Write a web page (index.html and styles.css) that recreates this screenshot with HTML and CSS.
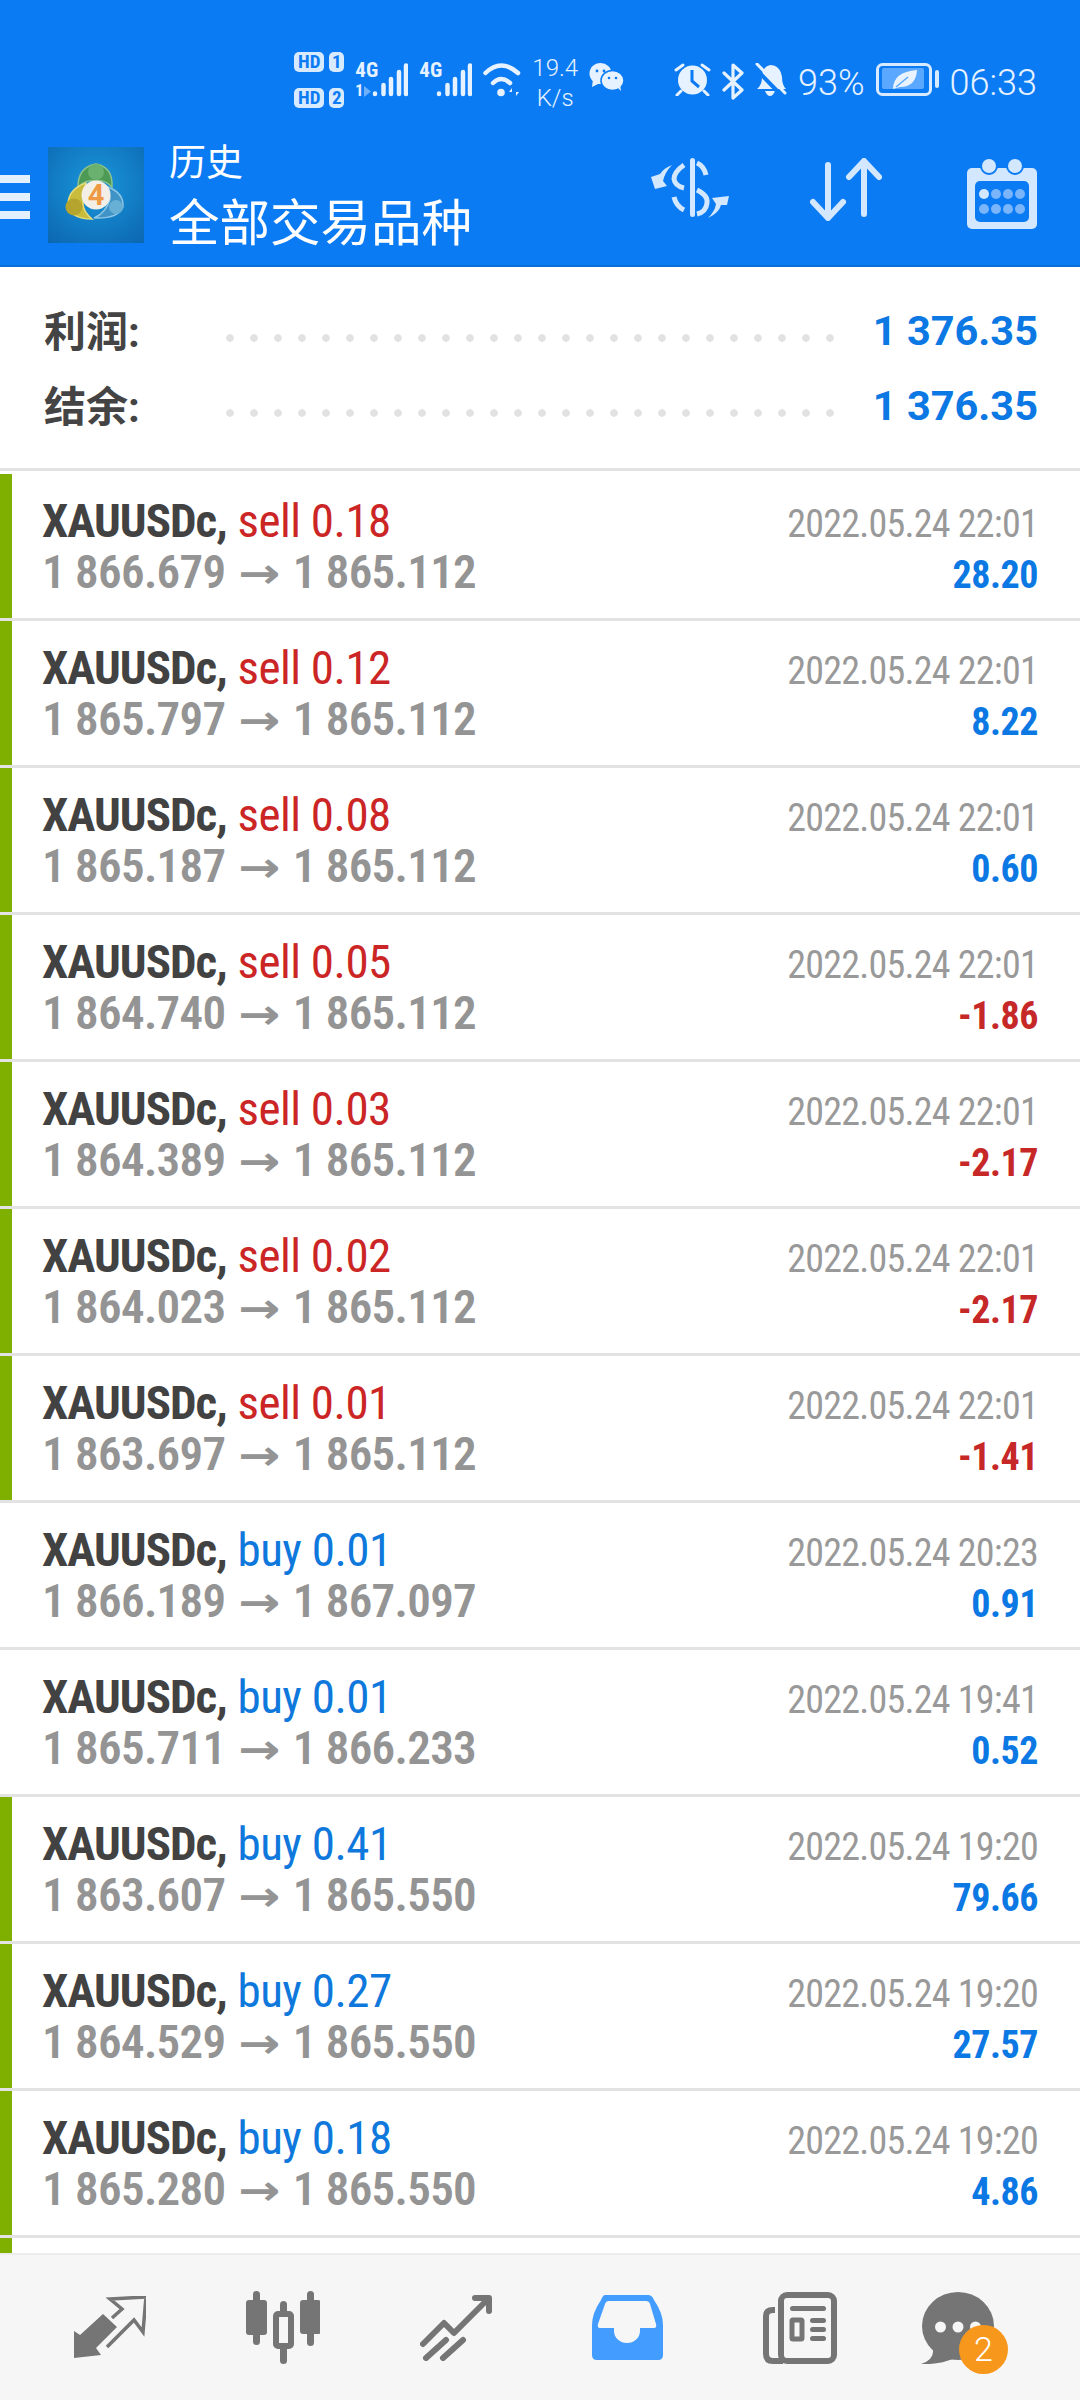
FILE: index.html
```html
<!DOCTYPE html>
<html lang="zh">
<head>
    <meta charset="UTF-8">
    <meta name="viewport" content="width=device-width, initial-scale=1.0">
    <title>历史</title>
    <link rel="stylesheet" href="styles.css">
</head>
<body>
<div class="app">
    <header class="header">
        <div class="statusbar">
            <div class="hd-grid">
                <span class="hd-badge">HD</span><span class="hd-badge">1</span>
                <span class="hd-badge">HD</span><span class="hd-badge">2</span>
            </div>
            <div class="signal">
                <div class="net-labels"><span class="net-text">4G</span><span class="net-small">1<svg width="7" height="11" viewBox="0 0 7 11"><path d="M0 0L7 5.500L0 11Z" fill="#6fb0fb"/></svg></span></div>
                <svg class="bars" width="37" height="34" viewBox="16 0 37 34" stroke="#e6f2ff" stroke-width="4.500" stroke-linecap="round"><path d="M20 31V30.500M28.500 31V22M36 31V16M44 31V9M51 31V2.500"/></svg>
            </div>
            <div class="signal">
                <div class="net-labels"><span class="net-text">4G</span></div>
                <svg class="bars" width="37" height="34" viewBox="16 0 37 34" stroke="#e6f2ff" stroke-width="4.500" stroke-linecap="round"><path d="M20 31V30.500M28.500 31V22M36 31V16M44 31V9M51 31V2.500"/></svg>
            </div>
            <svg width="38" height="34" viewBox="0 0 38 34" fill="none" stroke="#e6f2ff" stroke-linecap="round">
                <path d="M2.500 10Q18 -5 35 10" stroke-width="4.500"/>
                <path d="M10 20Q18 12 27 20" stroke-width="4.500"/>
                <circle cx="18" cy="29.500" r="3.800" fill="#e6f2ff" stroke="none"/>
                <path d="M29 25L26 29H29V33ZM33 33L36 29H33V25Z" fill="#e6f2ff" stroke="none"/>
            </svg>
            <div class="speed"><span>19.4</span><span>K/s</span></div>
            <svg width="35" height="28" viewBox="0 0 35 28">
                <ellipse cx="11.500" cy="10.500" rx="11" ry="10.500" fill="#e6f2ff"/>
                <path d="M4 16L3 24L11 20Z" fill="#e6f2ff"/>
                <ellipse cx="23.500" cy="17.500" rx="11.500" ry="10" fill="#e6f2ff" stroke="#0b7bf4" stroke-width="1.500"/>
                <path d="M28 24L32 28L31 21Z" fill="#e6f2ff"/>
                <circle cx="8" cy="8" r="1.400" fill="#0b7bf4"/><circle cx="15" cy="8" r="1.400" fill="#0b7bf4"/>
                <circle cx="20" cy="15" r="1.300" fill="#0b7bf4"/><circle cx="27" cy="15" r="1.300" fill="#0b7bf4"/>
            </svg>
            <svg class="status-split" width="37" height="33" viewBox="0 0 37 33">
                <circle cx="18.500" cy="17" r="14.500" fill="#e6f2ff"/>
                <path d="M18 7V18L25 24" fill="none" stroke="#0b7bf4" stroke-width="3"/>
                <path d="M2 7L9 2M35 7L28 2M7 28L3 32M30 28L34 32" stroke="#e6f2ff" stroke-width="3" stroke-linecap="round"/>
            </svg>
            <svg width="22" height="37" viewBox="0 0 22 37" fill="none" stroke="#e6f2ff" stroke-width="3.200" stroke-linejoin="round" stroke-linecap="round">
                <path d="M2 10L20 27L11 35V2L20 10L2 27"/>
            </svg>
            <svg width="32" height="33" viewBox="0 0 32 33">
                <path d="M2 26Q7 22 7 14Q7 4 15 2Q25 2 27 14Q27 22 31 26Z" fill="#e6f2ff"/>
                <path d="M10 28H20Q18 33 15 33Q12 33 10 28Z" fill="#e6f2ff"/>
                <path d="M-1 4L26 32" stroke="#0b7bf4" stroke-width="4"/>
                <path d="M2 1L30 30" stroke="#e6f2ff" stroke-width="3" stroke-linecap="round"/>
            </svg>
            <span class="status-text">93%</span>
            <svg width="63" height="33" viewBox="0 0 63 33">
                <rect x="1.500" y="1.500" width="53" height="30" rx="5" fill="none" stroke="#d8eaff" stroke-width="3"/>
                <rect x="6" y="5" width="42" height="21" rx="2" fill="#5aa8ff"/>
                <path d="M17 26Q17 9 41 7Q40 24 24 24Z" fill="#e9f3ff"/>
                <path d="M20 24L32 14" stroke="#5aa8ff" stroke-width="1.500"/>
                <rect x="59" y="7" width="4" height="18" rx="2" fill="#d8eaff"/>
            </svg>
            <span class="status-text">06:33</span>
        </div>
        <div class="toolbar">
            <div class="menu-icon"><span></span><span></span><span></span></div>
            <div class="logo">
                <svg width="96" height="96" viewBox="0 0 96 96">
                    <path d="M30 40Q30 20 48 17Q65 20 64 40Q56 32 48 34Q38 32 30 40Z" fill="#4c9a55" stroke="#8cc28b" stroke-width="1.500"/>
                    <circle cx="48" cy="25" r="8" fill="#6ab06e"/>
                    <path d="M38 36Q20 42 20 58Q22 72 44 72Q32 62 36 50Z" fill="#c9bb3c" stroke="#e4dc7a" stroke-width="1.500"/>
                    <circle cx="26" cy="60" r="8.500" fill="#b5a52e"/>
                    <path d="M60 40Q76 46 75 60Q70 72 46 71Q58 66 62 52Z" fill="#3f93c6" stroke="#8cc6e4" stroke-width="1.500"/>
                    <circle cx="68" cy="60" r="7" fill="#68afd6"/>
                    <circle cx="48" cy="48" r="14.500" fill="#f3eee6"/>
                </svg>
                <span class="logo-num">4</span>
            </div>
            <div class="titles">
                <div class="title-small">历史</div>
                <div class="title-big">全部交易品种</div>
            </div>
            <div class="tools">
                <svg width="79" height="60" viewBox="0 0 79 60" fill="#d3e8ff">
                    <path d="M21 7Q13 10 9 16L0 19L4 31L16 28L12 23Q14 14 21 7Z"/>
                    <path d="M57 60Q68 55 70 47L76 47L78 38L61 40L65 46Q64 53 57 60Z"/>
                    <g fill="none" stroke="#d3e8ff" stroke-width="5">
                        <path d="M41.500 2.500V56.500" stroke-linecap="round"/>
                        <path d="M33 7Q23 14 23 21Q24 28 33 30"/>
                        <path d="M46 5Q53 8 55 17"/>
                        <path d="M46 32Q57 37 56 45Q55 54 46 56"/>
                        <path d="M23 39Q25 48 33 52"/>
                    </g>
                </svg>
                <svg class="tool-arrows" width="72" height="63" viewBox="0 0 72 63" fill="none" stroke="#d3e8ff" stroke-width="6" stroke-linecap="round" stroke-linejoin="round">
                    <path d="M18 7V60M3 44L18 60L33 44"/>
                    <path d="M54 3V56M39 19L54 3L69 19"/>
                </svg>
                <svg width="70" height="71" viewBox="0 0 70 71">
                    <rect y="10" width="70" height="61" rx="5" fill="#d3e8ff"/>
                    <rect x="8" y="23" width="54" height="41" rx="5" fill="#0b7bf4"/>
                    <circle cx="22" cy="8" r="8" fill="#d3e8ff" stroke="#0b7bf4" stroke-width="2"/>
                    <circle cx="48" cy="8" r="8" fill="#d3e8ff" stroke="#0b7bf4" stroke-width="2"/>
                    <g fill="#7ab5fb">
                        <circle cx="17" cy="36" r="5" fill="#d3e8ff"/><circle cx="29" cy="36" r="5"/><circle cx="41" cy="36" r="5"/><circle cx="53" cy="36" r="5"/>
                        <circle cx="17" cy="51" r="5"/><circle cx="29" cy="51" r="5"/><circle cx="41" cy="51" r="5"/><circle cx="53" cy="51" r="5"/>
                    </g>
                </svg>
            </div>
        </div>
    </header>

    <section class="summary">
        <div class="summary-row"><span class="summary-label">利润:</span><span class="dots"></span><span class="summary-value">1 376.35</span></div>
        <div class="summary-row"><span class="summary-label">结余:</span><span class="dots"></span><span class="summary-value">1 376.35</span></div>
    </section>

    <main class="list">
        <div class="row flag"><div><div class="line"><b class="sym">XAUUSDc,</b> <span class="sell">sell 0.18</span></div><div class="line price">1 866.679 <span class="arrow">→</span> 1 865.112</div></div><div class="side"><div class="line date">2022.05.24 22:01</div><div class="line pos">28.20</div></div></div>
        <div class="row flag"><div><div class="line"><b class="sym">XAUUSDc,</b> <span class="sell">sell 0.12</span></div><div class="line price">1 865.797 <span class="arrow">→</span> 1 865.112</div></div><div class="side"><div class="line date">2022.05.24 22:01</div><div class="line pos">8.22</div></div></div>
        <div class="row flag"><div><div class="line"><b class="sym">XAUUSDc,</b> <span class="sell">sell 0.08</span></div><div class="line price">1 865.187 <span class="arrow">→</span> 1 865.112</div></div><div class="side"><div class="line date">2022.05.24 22:01</div><div class="line pos">0.60</div></div></div>
        <div class="row flag"><div><div class="line"><b class="sym">XAUUSDc,</b> <span class="sell">sell 0.05</span></div><div class="line price">1 864.740 <span class="arrow">→</span> 1 865.112</div></div><div class="side"><div class="line date">2022.05.24 22:01</div><div class="line neg">-1.86</div></div></div>
        <div class="row flag"><div><div class="line"><b class="sym">XAUUSDc,</b> <span class="sell">sell 0.03</span></div><div class="line price">1 864.389 <span class="arrow">→</span> 1 865.112</div></div><div class="side"><div class="line date">2022.05.24 22:01</div><div class="line neg">-2.17</div></div></div>
        <div class="row flag"><div><div class="line"><b class="sym">XAUUSDc,</b> <span class="sell">sell 0.02</span></div><div class="line price">1 864.023 <span class="arrow">→</span> 1 865.112</div></div><div class="side"><div class="line date">2022.05.24 22:01</div><div class="line neg">-2.17</div></div></div>
        <div class="row flag"><div><div class="line"><b class="sym">XAUUSDc,</b> <span class="sell">sell 0.01</span></div><div class="line price">1 863.697 <span class="arrow">→</span> 1 865.112</div></div><div class="side"><div class="line date">2022.05.24 22:01</div><div class="line neg">-1.41</div></div></div>
        <div class="row"><div><div class="line"><b class="sym">XAUUSDc,</b> <span class="buy">buy 0.01</span></div><div class="line price">1 866.189 <span class="arrow">→</span> 1 867.097</div></div><div class="side"><div class="line date">2022.05.24 20:23</div><div class="line pos">0.91</div></div></div>
        <div class="row"><div><div class="line"><b class="sym">XAUUSDc,</b> <span class="buy">buy 0.01</span></div><div class="line price">1 865.711 <span class="arrow">→</span> 1 866.233</div></div><div class="side"><div class="line date">2022.05.24 19:41</div><div class="line pos">0.52</div></div></div>
        <div class="row flag"><div><div class="line"><b class="sym">XAUUSDc,</b> <span class="buy">buy 0.41</span></div><div class="line price">1 863.607 <span class="arrow">→</span> 1 865.550</div></div><div class="side"><div class="line date">2022.05.24 19:20</div><div class="line pos">79.66</div></div></div>
        <div class="row flag"><div><div class="line"><b class="sym">XAUUSDc,</b> <span class="buy">buy 0.27</span></div><div class="line price">1 864.529 <span class="arrow">→</span> 1 865.550</div></div><div class="side"><div class="line date">2022.05.24 19:20</div><div class="line pos">27.57</div></div></div>
        <div class="row flag"><div><div class="line"><b class="sym">XAUUSDc,</b> <span class="buy">buy 0.18</span></div><div class="line price">1 865.280 <span class="arrow">→</span> 1 865.550</div></div><div class="side"><div class="line date">2022.05.24 19:20</div><div class="line pos">4.86</div></div></div>
        <div class="row flag"></div>
    </main>

    <nav class="nav">
        <svg width="72" height="64" viewBox="0 0 72 64">
            <path d="M0 62V35L6 39L29 18L43 31L22 52L27 59Z" fill="#757575"/>
            <path d="M38 22L48 13L36 3L72 1L69 36L60 24L33 51" fill="none" stroke="#757575" stroke-width="3.500"/>
        </svg>
        <svg width="74" height="74" viewBox="0 0 74 74">
            <g fill="#757575">
                <rect x="7" y="0" width="7" height="54" rx="3.500"/><rect x="0" y="9" width="21" height="35" rx="3"/>
                <rect x="61" y="0" width="7" height="55" rx="3.500"/><rect x="54" y="9" width="21" height="34" rx="3"/>
                <rect x="34" y="10" width="7" height="63" rx="3.500"/>
            </g>
            <rect x="30" y="23" width="15" height="32" rx="2" fill="#f6f6f6" stroke="#757575" stroke-width="6"/>
        </svg>
        <svg width="72" height="66" viewBox="0 0 72 66" fill="none" stroke="#757575" stroke-width="6" stroke-linecap="round" stroke-linejoin="round">
            <path d="M3 49L24 28L34 38L68 4M55 3H69V16"/>
            <path d="M6 63L26 45M23 63L43 45"/>
        </svg>
        <svg width="71" height="66" viewBox="0 0 71 66">
            <path d="M13 0H56Q60 0 62 5Q71 18 71 30V60Q71 65 66 65H5Q0 65 0 60V30Q0 18 9 5Q11 0 13 0Z" fill="#439cff"/>
            <path d="M17 6H54Q57 6 58 9L64 29Q65 33 62 33H48V36A13 12 0 0 1 22 36V33H8Q5 33 6 29L13 9Q14 6 17 6Z" fill="#f6f6f6"/>
        </svg>
        <svg width="74" height="72" viewBox="0 0 74 72">
            <rect x="18" y="3" width="53" height="66" rx="6" fill="none" stroke="#757575" stroke-width="6"/>
            <path d="M12 18H10Q3 18 3 24V62Q3 69 10 69H20" fill="none" stroke="#757575" stroke-width="6"/>
            <rect x="27" y="14" width="36" height="5" rx="2.500" fill="#757575"/>
            <rect x="29" y="28" width="10" height="19" rx="1" fill="none" stroke="#757575" stroke-width="5"/>
            <rect x="47" y="26" width="16" height="5" rx="2.500" fill="#757575"/>
            <rect x="47" y="35" width="16" height="5" rx="2.500" fill="#757575"/>
            <rect x="47" y="44" width="16" height="5" rx="2.500" fill="#757575"/>
        </svg>
        <div class="chat">
            <svg width="74" height="72" viewBox="0 0 74 72">
                <ellipse cx="37" cy="34" rx="36" ry="34" fill="#757575"/>
                <path d="M12 55Q14 68 0 72Q18 73 34 66Z" fill="#757575"/>
                <circle cx="19.500" cy="35" r="5.500" fill="#f6f6f6"/><circle cx="37" cy="35" r="5.500" fill="#f6f6f6"/><circle cx="54.500" cy="35" r="5.500" fill="#f6f6f6"/>
            </svg>
            <span class="badge">2</span>
        </div>
    </nav>
</div>
</body>
</html>
```

FILE: styles.css
```css
* { box-sizing: border-box; }
html, body { margin: 0; padding: 0; }
body { font-family: Roboto, "Noto Sans CJK SC", sans-serif; background: #fff; }
.app { width: 1080px; height: 2400px; display: flex; flex-direction: column; overflow: hidden; }

.header { height: 267px; background: #0b7bf4; border-bottom: 2px solid #0a6fd8; color: #fff; }
.statusbar { height: 130px; padding: 50px 43px 0 0; display: flex; justify-content: flex-end; align-items: flex-start; gap: 11px; color: #e6f2ff; }
.statusbar svg { flex: none; margin-top: 13px; }
.status-split { margin-left: 39px; }
.status-text { font-size: 36px; line-height: 40px; margin-top: 13px; font-weight: 300; }
.speed { display: flex; flex-direction: column; align-items: center; font-size: 24px; line-height: 30px; font-weight: 300; margin-top: 3px; }

.hd-grid { display: grid; grid-template-columns: 30px 15px; column-gap: 5px; row-gap: 16px; margin-top: 2px; }
.hd-badge { height: 20px; border-radius: 5px; background: #d8eaff; color: #0b7bf4; font-size: 19px; font-weight: 700; font-stretch: 75%; line-height: 20px; text-align: center; }
.signal { width: 53px; display: flex; justify-content: space-between; margin-top: 13px; }
.statusbar .bars { margin-top: 0; }
.net-labels { width: 16px; display: flex; flex-direction: column; justify-content: space-between; height: 34px; }
.net-text { font-size: 21px; font-weight: 700; font-stretch: 75%; line-height: 15px; }
.net-small { font-size: 16px; font-weight: 700; font-stretch: 75%; line-height: 12px; display: flex; align-items: center; gap: 1px; }
.statusbar .net-small svg { margin-top: 0; }

.toolbar { height: 135px; display: flex; align-items: flex-start; }
.menu-icon { width: 30px; margin-top: 45px; display: flex; flex-direction: column; gap: 10px; }
.menu-icon span { display: block; height: 8px; background: #e3f1ff; }
.logo { position: relative; width: 96px; height: 96px; margin: 17px 0 0 18px; background: radial-gradient(circle at 50% 40%, #1a97dc, #0b66b0); }
.logo svg { display: block; }
.logo-num { position: absolute; left: 0; right: 0; top: 31px; text-align: center; font-size: 29px; line-height: 34px; font-weight: 700; color: #ee9a45; }
.titles { margin: 11px 0 0 25px; flex: 1; }
.title-small { font-size: 37px; line-height: 46px; }
.title-big { font-size: 50.500px; line-height: 62px; margin-top: 6px; }
.tools { margin-top: 28px; padding-right: 43px; display: flex; align-items: flex-start; gap: 80px; }
.tools svg { flex: none; }
.tools .tool-arrows { margin-right: 5px; }

.summary { height: 204px; padding: 26px 42px 0 44px; border-bottom: 3px solid #e3e3e3; }
.summary-row { height: 75px; display: flex; align-items: center; }
.summary-label { width: 174px; margin-top: -4px; font-size: 42px; font-weight: 700; color: #444; }
.dots { width: 624px; height: 8px; margin-top: 14px; background: radial-gradient(circle, #e2e2e2 3.500px, transparent 4px) 0 0 / 24px 8px repeat-x; }
.summary-value { flex: 1; text-align: right; font-size: 41.500px; font-weight: 700; color: #0b78e3; }

.list { flex: 1; overflow: hidden; padding-top: 3px; }
.row { height: 147px; padding: 21px 42px 0 42px; display: flex; justify-content: space-between; border-bottom: 3px solid #e3e3e3; }
.flag { box-shadow: inset 12px 0 0 #7fb000; }
.line { height: 51px; line-height: 51px; white-space: nowrap; }
.row .line { font-size: 47px; font-stretch: 75%; }
.sym { font-weight: 700; color: #424242; letter-spacing: -1px; }
.sell { color: #cb2525; letter-spacing: -0.5px; }
.buy { color: #0e78dc; letter-spacing: -0.5px; }
.row .price { font-weight: 600; color: #949494; letter-spacing: -0.7px; }
.arrow { display: inline-block; width: 47px; text-align: center; font-family: "DejaVu Sans", sans-serif; font-stretch: normal; font-weight: 700; font-size: 42px; line-height: 51px; letter-spacing: 0; transform: scaleX(1.2); }
.side { text-align: right; margin-top: 4px; }
.row .date { font-size: 38px; color: #999; letter-spacing: -0.75px; }
.row .pos { font-size: 38px; font-weight: 700; color: #0b78e3; letter-spacing: -0.45px; }
.row .neg { font-size: 38px; font-weight: 700; color: #c62828; letter-spacing: -0.45px; }

.nav { height: 147px; flex: none; background: #f6f6f6; padding-left: 74px; display: flex; align-items: center; gap: 100px; border-top: 2px solid #ececec; }
.nav svg { flex: none; display: block; }
.chat { position: relative; margin-left: -16px; }
.badge { position: absolute; left: 38px; top: 33px; width: 49px; height: 49px; border-radius: 50%; background: #f7981d; color: #fff; font-size: 34px; font-weight: 300; line-height: 49px; text-align: center; }
```
